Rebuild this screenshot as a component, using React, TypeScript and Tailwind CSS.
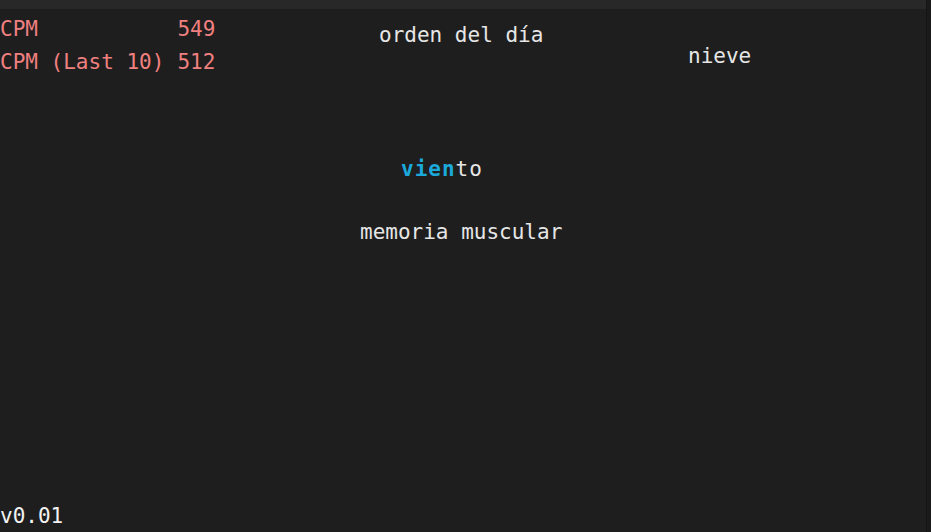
import React from 'react';

const words = [
     { text: 'orden del día', left: 379, top: 19, typed: 0 },
     { text: 'nieve', left: 688, top: 40, typed: 0 },
     { text: 'viento', left: 401, top: 153, typed: 4 },
     { text: 'memoria muscular', left: 360, top: 216, typed: 0 },
];

export default function App() {
     return (
          <div
               className="flex h-[532px] w-full overflow-hidden bg-[#1e1e1e] text-[21px] text-[#e6e6e6]"
               style={{ fontFamily: '"DejaVu Sans Mono", "Liberation Mono", monospace' }}
          >
               <div className="flex flex-1 flex-col">
                    {/* top strip */}
                    <div className="h-[9px] w-full shrink-0 bg-[#282828]" />

                    <div className="relative flex flex-1 flex-col">
                         {/* stats */}
                         <div className="mt-[4px] grid w-max grid-cols-[auto_auto] gap-x-[13px] leading-[33px] text-[#f08080]">
                              <span>CPM</span>
                              <span>549</span>
                              <span>CPM (Last 10)</span>
                              <span>512</span>
                         </div>

                         {/* falling words */}
                         {words.map((w) => (
                              <span
                                   key={w.text}
                                   className={`absolute whitespace-pre leading-[33px] ${w.typed > 0 ? 'tracking-[1px]' : ''}`}
                                   style={{ left: w.left, top: w.top - 9 }}
                              >
                                   <span className="font-bold text-[#1ba9dc]">{w.text.slice(0, w.typed)}</span>
                                   {w.text.slice(w.typed)}
                              </span>
                         ))}

                         <div className="mt-auto mb-[-1px] leading-[33px] text-[#f2f2f2]">v0.01</div>
                    </div>
               </div>

               {/* scrollbar gutter */}
               <div className="w-[5px] shrink-0 border-l border-[#151515] bg-[#1a1a1a]" />
          </div>
     );
}
